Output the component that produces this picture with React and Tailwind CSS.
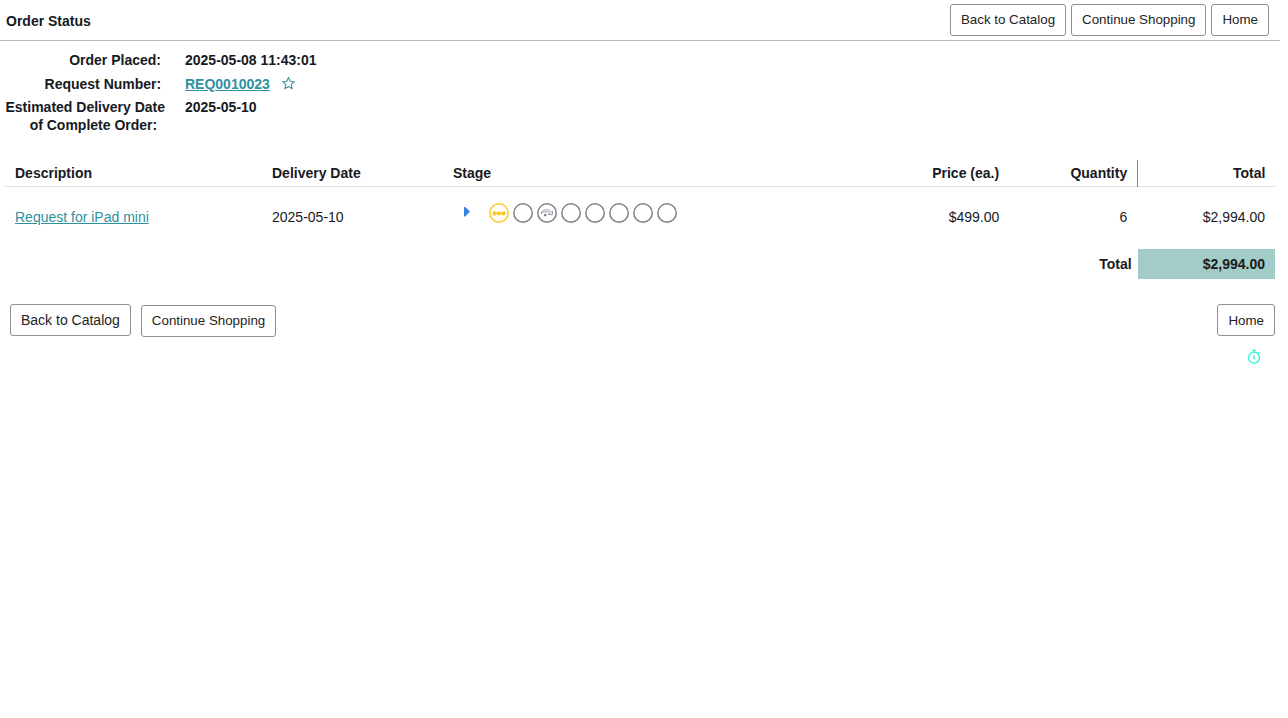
import React from "react";

function Button({ children, className = "text-[13.333px] leading-[30px]" }) {
  return (
    <button
      className={`h-8 shrink-0 whitespace-nowrap rounded-[3px] border border-[#8b8f93] bg-white px-[10px] text-[#1f2323] ${className}`}
    >
      {children}
    </button>
  );
}

function StageIcon({ kind }) {
  const color = kind === "active" ? "#fbc926" : "#7c828b";
  return (
    <svg width="20" height="20" viewBox="0 0 20 20" fill="none">
      <circle cx="10" cy="10" r="9.2" stroke={color} strokeWidth="1.5" />
      {kind === "active" && (
        <g fill={color}>
          <circle cx="5.5" cy="10.4" r="2.1" />
          <circle cx="10" cy="10.4" r="2.1" />
          <circle cx="14.5" cy="10.4" r="2.1" />
          <path d="M5 9.6h10v1.6H5z" />
        </g>
      )}
      {kind === "skipped" && (
        <g>
          <path
            d="M4 10.4C5 8 7 6.700 9.200 6.700c2.200 0 3.900 1 5 2.700l1.400-1.200-.4 3.600-3.700-.5 1.400-.9C11.900 9.200 10.700 8.700 9.200 8.700 7.200 8.700 5.500 9.300 4 10.400z"
            stroke={color}
            strokeWidth=".8"
          />
          <circle cx="8.200" cy="12.100" r="1.300" fill={color} />
        </g>
      )}
    </svg>
  );
}

const stages = ["active", "empty", "skipped", "empty", "empty", "empty", "empty", "empty"];
const columns = "grid grid-cols-[257px_181px_566px_128px_138px]";

export default function App() {
  return (
    <div
      className="min-h-screen w-full bg-white text-[14px] leading-[18px] text-[#181a1f]"
      style={{ fontFamily: '"Liberation Sans", Arial, sans-serif' }}
    >
      <div className="w-[1280px]">
        <header className="flex h-[41px] items-start justify-between border-b border-[#b7babd] pl-[6px] pr-[11px]">
          <h1 className="pt-3 font-bold">Order Status</h1>
          <div className="flex gap-[5px] pt-1">
            <Button>Back to Catalog</Button>
            <Button>Continue Shopping</Button>
            <Button>Home</Button>
          </div>
        </header>

        <section className="grid h-[119px] grid-cols-[165px_1fr] grid-rows-[24px_23px_36px] gap-x-5 pt-[10px] font-bold">
          <div className="pr-1 text-right">Order Placed:</div>
          <div className="[font-kerning:none]">2025-05-08 11:43:01</div>
          <div className="pr-[3.800px] text-right">Request Number:</div>
          <div className="flex">
            <a className="text-[#2e91a0] underline" href="#request">REQ0010023</a>
            <svg className="ml-3 mt-px" width="13" height="14" viewBox="0 0 13 14" fill="none">
              <path
                d="M6.500 1.400l1.700 3.900 4.200.4-3.200 2.800.95 4.200-3.650-2.200-3.650 2.200.95-4.200L.65 5.700l4.200-.4z"
                stroke="#3b95a3"
                strokeWidth="1.100"
                strokeLinejoin="round"
              />
            </svg>
          </div>
          <div className="whitespace-nowrap text-right">
            Estimated Delivery Date
            <br />
            <span className="pr-[7.800px]">of Complete Order:</span>
          </div>
          <div>2025-05-10</div>
        </section>

        <main className="px-[5px]">
          <div className={`${columns} h-[27px] font-bold leading-[26px]`}>
            <div className="border-b border-[#e0e2e5] pl-[10px]">Description</div>
            <div className="border-b border-[#e0e2e5] pl-[10px]">Delivery Date</div>
            <div className="flex justify-between border-b border-[#e0e2e5] pl-[10px] pr-[9.900px]">
              <span>Stage</span>
              <span>Price (ea.)</span>
            </div>
            <div className="border-b border-[#e0e2e5] pr-[9.800px] text-right">Quantity</div>
            <div className="flex">
              <div className="w-px bg-[#5b94c7]" />
              <div className="flex-1 border-b border-[#e0e2e5] pr-[9.600px] text-right">Total</div>
            </div>
          </div>

          <div className={`${columns} h-[62px] pt-[21px]`}>
            <div className="pl-[10px]">
              <a className="text-[#2e91a0] underline" href="#item">Request for iPad mini</a>
            </div>
            <div className="pl-[10px]">2025-05-10</div>
            <div className="flex items-start justify-between pl-[21px] pr-[9.700px]">
              <div className="-mt-[5px] flex items-start">
                <svg className="mr-[19px] mt-[4px]" width="6" height="10" viewBox="0 0 6 10">
                  <path d="M0 0h1.200L6 4.600 1.200 9.500H0z" fill="#3484e0" />
                </svg>
                <div className="flex gap-1">
                  {stages.map((kind, index) => (
                    <StageIcon key={index} kind={kind} />
                  ))}
                </div>
              </div>
              <span>$499.00</span>
            </div>
            <div className="pr-[9.600px] text-right">6</div>
            <div className="pr-[10px] text-right">$2,994.00</div>
          </div>

          <div className="flex h-[30px] justify-end font-bold leading-[30px]">
            <div className="pr-[6.400px]">Total</div>
            <div className="w-[137px] bg-[#a2ccc7] pr-[10px] text-right">$2,994.00</div>
          </div>

          <div className="flex items-start pl-[5px] pt-[25px]">
            <Button className="text-[14px] leading-[30px]">Back to Catalog</Button>
            <div className="ml-[10px] pt-px">
              <Button>Continue Shopping</Button>
            </div>
            <div className="ml-auto">
              <Button className="pt-px text-[13.333px] leading-[30px]">Home</Button>
            </div>
          </div>

          <div className="flex justify-end pr-[14px] pt-[12px]">
            <svg width="14" height="15" viewBox="0 0 14 15" fill="none" stroke="#31f5dc">
              <circle cx="7" cy="8.600" r="5.500" strokeWidth="1.300" />
              <path d="M5.200 1.400h3.600M7 1.600v2M10.900 3.500l1 1" strokeWidth="1.400" />
              <path d="M7 5.800v2.400" strokeWidth="1" />
              <path d="M7 7.800v2.200" strokeWidth="1.800" />
            </svg>
          </div>
        </main>
      </div>
    </div>
  );
}
